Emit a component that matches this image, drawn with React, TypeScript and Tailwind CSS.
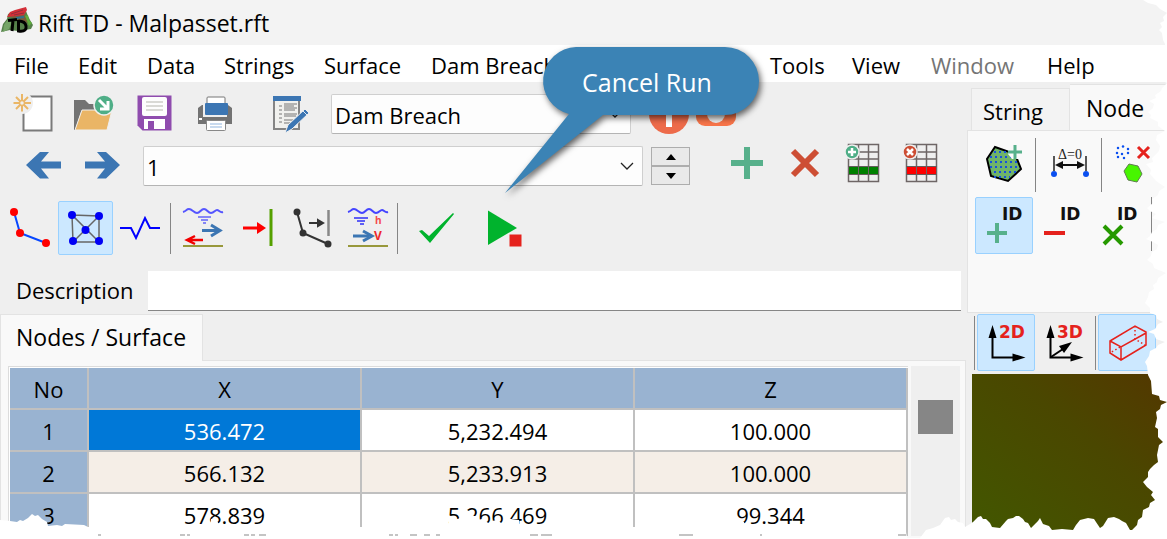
import type { ReactNode } from "react";
import clsx from "clsx";

const menuItems = [
  { label: "File", width: "w-[64px]" },
  { label: "Edit", width: "w-[69px]" },
  { label: "Data", width: "w-[77px]" },
  { label: "Strings", width: "w-[100px]" },
  { label: "Surface", width: "w-[107px]" },
  { label: "Dam Breach", width: "w-[339px]" },
  { label: "Tools", width: "w-[82px]" },
  { label: "View", width: "w-[79px]" },
  { label: "Window", width: "w-[116px]", disabled: true },
  { label: "Help", width: "w-[80px]" },
];

const nodes = [
  ["536.472", "5,232.494", "100.000"],
  ["566.132", "5,233.913", "100.000"],
  ["578.839", "5,266.469", "99.344"],
];

type ButtonProps = { label: string; className?: string; children: ReactNode };

function IconButton({ label, className, children }: ButtonProps) {
  return (
    <button
      type="button"
      aria-label={label}
      title={label}
      className={clsx("flex shrink-0 items-center justify-center", className)}
    >
      {children}
    </button>
  );
}

function ToolButton({
  label,
  active,
  children,
  width = "w-[55px]",
}: ButtonProps & { active?: boolean; width?: string }) {
  return (
    <IconButton
      label={label}
      className={clsx(
        "h-full rounded-xs border",
        width,
        active ? "border-[#99d1ff] bg-[#cce8ff]" : "border-transparent"
      )}
    >
      {children}
    </IconButton>
  );
}

function Separator({ className }: { className?: string }) {
  return <div className={clsx("w-px shrink-0 bg-[#858585]", className)} />;
}

function Icon({ children }: { children: ReactNode }) {
  return (
    <svg width="40" height="40" viewBox="0 0 40 40" className="shrink-0 overflow-visible" fill="none">
      {children}
    </svg>
  );
}

function TallIcon({ children }: { children: ReactNode }) {
  return (
    <svg width="40" height="46" viewBox="0 0 40 46" className="shrink-0" fill="none">
      {children}
    </svg>
  );
}

function AppLogo() {
  return (
    <svg width="34" height="28" viewBox="0 0 34 28" className="mb-1 shrink-0" fill="none">
      <path d="m1 25 2-8 4-5 1-5 6-3 9 1 3-1 2 5 2 4 3 5-2 4-6 1-7 1-8-1z" fill="#55804a" />
      <path d="m8 9 6-3 9 1 4 4 2 5-5-1-8-3z" fill="#7a5d3b" />
      <path d="m4 18 4-6 5 1-4 9-6 3z" fill="#75a567" />
      <path d="m25 9 3-1 1 5 3 3-3 3z" fill="#5fae3b" />
      <path d="m7 10 3-5 5-2L26 0l1 3-3 5-8 1z" fill="#d42f38" />
      <path d="m11 7 12-4M14 8l10-2" stroke="#93303a" strokeWidth="1" />
      <path d="m16 11 8-1" stroke="#2e7390" strokeWidth="2" />
      <path d="m8 13.500 9-1M13 13l-1 11" stroke="#000" strokeWidth="3" />
      <path d="M18.500 13v11c7 1 8-2 7.500-5s-2-5-7.500-5z" stroke="#000" strokeWidth="3" />
    </svg>
  );
}

function NewIcon() {
  return (
    <Icon>
      <path d="M9.500 2.500h28v34h-28z" fill="#fff" stroke="#7a7a7a" strokeWidth="2" />
      <circle cx="8" cy="9" r="11" fill="#efefef" />
      <path d="M8 0v6m0 6v5.500M-.500 9h6m5 0H17M2 3l4 4m4 4 4 4M14 3l-4 4m-4 4-4 4" stroke="#eab666" strokeWidth="2" />
      <circle cx="8" cy="9" r="2.500" stroke="#eab666" strokeWidth="1.500" />
    </Icon>
  );
}

function OpenIcon() {
  return (
    <Icon>
      <path d="M0 6h11l4 4h12v8H7L1 36H0z" fill="#737373" />
      <path d="M8 16h30l-5 20H1z" fill="#eab566" stroke="#efefef" strokeWidth="1" />
      <circle cx="30" cy="11" r="10" fill="#4fae87" stroke="#efefef" strokeWidth="1.500" />
      <path d="m25 6 8 8m1-7v8h-8" stroke="#fff" strokeWidth="3" />
    </Icon>
  );
}

function SaveIcon() {
  return (
    <Icon>
      <path d="M3.500 1.500h34v35h-29l-5-5z" fill="#8f4cae" />
      <rect x="8" y="3" width="25" height="19" rx="2" fill="#fdfdfd" />
      <path d="M12 8h17m-17 4h17m-17 4h17" stroke="#b5b5ad" />
      <path d="M10 25h21v10H10z" fill="#fff" />
      <path d="M14 27h6v8h-6z" fill="#8f4cae" />
    </Icon>
  );
}

function PrintIcon() {
  return (
    <Icon>
      <path d="M4 14 8 11h26l4 3v16H4z" fill="#737373" />
      <path d="M9 9h24v14H9z" fill="#efefef" />
      <rect x="13" y="3" width="18" height="9" rx="1" fill="#fff" stroke="#777" />
      <rect x="11" y="9" width="23" height="12" rx="1" fill="#3c76b3" />
      <path d="M5 24h3v2H5z" fill="#fff" />
      <rect x="12.500" y="26.500" width="19" height="10" rx="1" fill="#fff" stroke="#888" />
      <path d="M16 30h12m-12 3h12" stroke="#91b5df" />
    </Icon>
  );
}

function NotesIcon() {
  return (
    <Icon>
      <path d="M4 4h25v31H4z" fill="#f1f1ee" stroke="#858585" strokeWidth="2" />
      <path d="M3 2h28v5H3z" fill="#3c76b3" />
      <path d="M9 12h3m-3 4h3m-3 4h3m-3 4h3m-3 4h3m2-18h13m-13 2h10m-10 2h13m-13 2h11m-11 4h13m-13 2h12m-12 4h9m-9 3h7" stroke="#777" />
      <path d="m15 39 3-8 17-16 4 4-17 16z" fill="#3c76b3" stroke="#efefef" />
      <path d="m33 17 4 4" stroke="#dfebf8" />
    </Icon>
  );
}

function TableIcon({ bar, badge, remove }: { bar: string; badge: string; remove?: boolean }) {
  return (
    <TallIcon>
      <path d="M5.500 1.500h30v37h-30zM15.500 1v38m10-38v38m-20-30h30m-30 7h30m-30 8h30m-30 7h30" stroke="#6e6666" strokeWidth="1.500" />
      <path d="M6 24h9v7H6zm10 0h9v7h-9zm10 0h9v7h-9z" fill={bar} />
      <path d="M5 23.500h31M5 31.500h31" stroke="#665c5c" />
      <circle cx="9" cy="9" r="7" fill={badge} stroke="#efefef" strokeWidth="1.500" />
      <path
        d={remove ? "m6 6 6 6m0-6-6 6" : "M9 5v8M5 9h8"}
        stroke="#fff"
        strokeWidth="2.500"
      />
    </TallIcon>
  );
}

const waves = "M0 4c4-1 3-3 6-3s5 4 8 4 4-4 7-4 4 4 7 4 4-3 6-3 3 3 6 2";

function FlowIcon() {
  return (
    <Icon>
      <path d={waves} stroke="#5555ff" strokeWidth="2" />
      <path d="M15 9h13m-10 3h7m-5 3h3" stroke="#6464fa" strokeWidth="1.500" />
      <path d="M19 21h16v3H19z" fill="#3c76b3" />
      <path d="m28 17 9 5.500-9 5.500" stroke="#3c76b3" strokeWidth="3" />
      <path d="M20 32H6m6-4-8 4 8 4" stroke="#f20000" strokeWidth="2.500" />
      <path d="M0 38h40" stroke="#98983b" strokeWidth="2" />
    </Icon>
  );
}

function DepthIcon() {
  return (
    <Icon>
      <path d={waves} stroke="#4545ff" strokeWidth="2" />
      <path d="M6 10h14M9 13h8m-5 3h4" stroke="#5f5ff5" strokeWidth="2" />
      <path d="M5 28h16" stroke="#3c76b3" strokeWidth="3" />
      <path d="m15 23 9 5-9 5" stroke="#3c76b3" strokeWidth="3" />
      <text x="27" y="16" fontSize="10" fontWeight="700" fill="#f54a4a">h</text>
      <text x="26" y="32" fontSize="12" fontWeight="700" fill="#ee2929">V</text>
      <path d="M0 38h40" stroke="#98983b" strokeWidth="2" />
    </Icon>
  );
}

function Combo({ id, label, value, className }: { id: string; label: string; value: string; className: string }) {
  return (
    <div className={clsx("relative h-10", className)}>
      <select
        id={id}
        aria-label={label}
        defaultValue={value}
        className="size-full appearance-none rounded-xs border border-[#cfcfcf] border-b-[#b4b4b4] bg-[#fdfdfd] pt-px pr-8 pl-[3px]"
      >
        <option>{value}</option>
      </select>
      <svg width="14" height="8" viewBox="0 0 14 8" fill="none" className="pointer-events-none absolute top-4 right-[9px]">
        <path d="m1 1 6 6 6-6" stroke="#222" strokeWidth="1.250" />
      </svg>
    </div>
  );
}

function FileToolbar() {
  return (
    <div className="flex items-center pt-3 pl-[14px]">
      <div className="flex gap-5">
        <IconButton label="New"><NewIcon /></IconButton>
        <IconButton label="Open"><OpenIcon /></IconButton>
        <IconButton label="Save"><SaveIcon /></IconButton>
        <IconButton label="Print"><PrintIcon /></IconButton>
      </div>
      <IconButton label="Notes" className="ml-9"><NotesIcon /></IconButton>
      <Combo id="stage" label="Data type" value="Dam Breach" className="ml-[21px] w-[300px]" />
      <div className="ml-[18px] flex gap-[7px]">
        <IconButton label="Information">
          <Icon>
            <circle cx="20" cy="20" r="20" fill="#ed6b4a" />
            <path d="M17 6h6v5h-6zm0 8h6v19h-6z" fill="#fff" />
          </Icon>
        </IconButton>
        <IconButton label="Support">
          <Icon>
            <rect y="2" width="40" height="30" rx="9" fill="#f8754a" />
            <circle cx="20" cy="20" r="9" fill="#efefef" />
          </Icon>
        </IconButton>
      </div>
    </div>
  );
}

function RecordToolbar() {
  return (
    <div className="mt-3 flex h-10 items-center pl-[24px]">
      <div className="flex gap-[18px]">
        <IconButton label="Previous">
          <TallIcon>
            <path d="M37 18.500v7H17l8 10h-9L2 22 16 9h9l-8 9.500z" fill="#3c76b3" />
          </TallIcon>
        </IconButton>
        <IconButton label="Next">
          <TallIcon>
            <path d="M3 18.500v7h20l-8 10h9L38 22 24 9h-9l8 9.500z" fill="#3c76b3" />
          </TallIcon>
        </IconButton>
      </div>
      <Combo id="record" label="Record" value="1" className="ml-[21px] w-[500px]" />
      <div className="ml-2 flex h-[38px] w-[39px] flex-col">
        {["M0 6 5 0l5 6z", "m0 0 5 6 5-6z"].map((path, i) => (
          <button
            key={path}
            type="button"
            aria-label={i ? "Decrease" : "Increase"}
            className="flex flex-1 items-center justify-center border border-[#adadad] bg-[#e9e9e9]"
          >
            <svg width="10" height="6" viewBox="0 0 10 6"><path d={path} /></svg>
          </button>
        ))}
      </div>
      <div className="ml-[37px] flex gap-[18px]">
        <IconButton label="Add">
          <TallIcon><path d="M20 4v32M4 20h32" stroke="#57b08b" strokeWidth="6" /></TallIcon>
        </IconButton>
        <IconButton label="Delete">
          <TallIcon><path d="m8 8 24 24M32 8 8 32" stroke="#cd4e34" strokeWidth="6" /></TallIcon>
        </IconButton>
        <IconButton label="Insert row"><TableIcon bar="#008000" badge="#4fae87" /></IconButton>
        <IconButton label="Remove row"><TableIcon bar="#ff0000" badge="#cd4e34" remove /></IconButton>
      </div>
    </div>
  );
}

function ModelToolbar() {
  return (
    <div className="mt-[15px] flex h-[54px] items-center pl-[3px]">
      <ToolButton label="Strings">
        <Icon>
          <path d="m3 4 6 21 26 10" stroke="#0847ff" strokeWidth="2" />
          <g fill="red"><circle cx="3" cy="4" r="4" /><circle cx="9" cy="25" r="4" /><circle cx="35" cy="35" r="4" /></g>
        </Icon>
      </ToolButton>
      <ToolButton label="Surface" active>
        <Icon>
          <path d="m6 7 27 1v26H7L6 7l27 27M33 8 7 34" stroke="#666" strokeWidth="1.500" />
          <g fill="#0000f5">
            <circle cx="6" cy="7" r="4" /><circle cx="33" cy="8" r="4" /><circle cx="19.500" cy="22" r="4" />
            <circle cx="7" cy="33" r="4" /><circle cx="33" cy="33" r="4" />
          </g>
        </Icon>
      </ToolButton>
      <ToolButton label="Sections">
        <Icon><path d="M-1 20h11l5 10 9-20 5 10h10" stroke="#00f" strokeWidth="2" /></Icon>
      </ToolButton>
      <Separator className="mr-1 ml-[2px] h-[51px]" />
      <ToolButton label="Inflow and outflow"><FlowIcon /></ToolButton>
      <ToolButton label="Boundary">
        <Icon>
          <path d="M5 20h16" stroke="red" strokeWidth="3" />
          <path d="m19 14 9 6-9 6z" fill="red" />
          <path d="M33 1v37" stroke="#55a000" strokeWidth="3" />
        </Icon>
      </ToolButton>
      <ToolButton label="String boundary">
        <Icon>
          <path d="m4 4 6 21 25 11" stroke="#333" strokeWidth="2" />
          <g fill="#333"><circle cx="4" cy="4" r="3.500" /><circle cx="10" cy="25" r="3.500" /><circle cx="35" cy="36" r="3.500" /></g>
          <path d="M16 15h12m-3-3 5 3-5 3z" fill="#333" stroke="#333" strokeWidth="2" />
          <path d="M35.500 2v26" stroke="#888" strokeWidth="2.500" />
        </Icon>
      </ToolButton>
      <ToolButton label="Depth and velocity"><DepthIcon /></ToolButton>
      <Separator className="mr-[10px] ml-[2px] h-[51px]" />
      <ToolButton label="Check">
        <Icon><path d="m3 23 3-1 7 6L37 5l1 1-24 29z" fill="#00b32d" /></Icon>
      </ToolButton>
      <ToolButton label="Run" width="ml-[14px] w-[55px]">
        <Icon>
          <path d="M3 2.500 32 20 3 37z" fill="#00b32d" />
          <path d="M24 26h13v13H24z" fill="#e5221d" stroke="#efefef" />
        </Icon>
      </ToolButton>
    </div>
  );
}

function NodeTable() {
  return (
    <div className="flex items-stretch pt-[5px] pr-[5px] pl-[7px]">
      <div className="min-w-0 flex-1 border-t border-l border-[#dcdcdc] bg-white pt-px pl-px">
        <table className="w-full table-fixed border-separate border-spacing-0 text-center">
          <colgroup>
            <col className="w-[79px]" />
            <col />
            <col />
            <col />
          </colgroup>
          <thead>
            <tr className="h-[42px]">
              {["No", "X", "Y", "Z"].map((name) => (
                <th key={name} scope="col" className="border-r-2 border-b-2 border-[#c0c0c0] bg-[#99b3d1] pt-[2px] font-normal">
                  {name}
                </th>
              ))}
            </tr>
          </thead>
          <tbody>
            {nodes.map((row, i) => (
              <tr key={row[0]} className={clsx("h-[42px]", i % 2 ? "bg-[#f5eee7]" : "bg-white")}>
                <th scope="row" className="border-r-2 border-b-2 border-[#c0c0c0] bg-[#99b3d1] pt-[2px] font-normal">
                  {i + 1}
                </th>
                {row.map((value, j) => (
                  <td
                    key={j}
                    className={clsx(
                      "border-r-2 border-b-2 border-[#c0c0c0] pt-[2px]",
                      i === 0 && j === 0 && "bg-[#0078d7] text-white"
                    )}
                  >
                    {value}
                  </td>
                ))}
              </tr>
            ))}
          </tbody>
        </table>
      </div>
      <div className="ml-[3px] w-[49px] bg-[#efefef] pt-[34px] pl-[7px]">
        <div className="h-[34px] w-[35px] bg-[#868686]" />
      </div>
    </div>
  );
}

function SidePanel() {
  return (
    <aside className="flex w-[200px] shrink-0 flex-col">
      <div role="tablist" className="flex h-[48px] items-end pl-1">
        <button type="button" role="tab" className="h-[42px] w-[99px] shrink-0 border border-b-0 border-[#e3e3e3] bg-[#f3f3f3] pt-[2px] pl-[11px] text-left">
          String
        </button>
        <button type="button" role="tab" aria-selected="true" className="h-[46px] flex-1 border-t border-[#e3e3e3] bg-[#f9f9f9] pl-4 text-left text-[23px]">
          Node
        </button>
      </div>

      <div className="h-[183px] border border-r-0 border-[#e3e3e3] bg-[#f9f9f9] pt-[5px] pl-[7px]">
        <div className="flex h-[57px] items-center">
          <ToolButton label="Add surface nodes" width="w-[58px]">
            <Icon>
              <path d="m11 2 20 7 6 15-13 12-17-5L3 14z" fill="#70b36a" stroke="#000" strokeWidth="2" />
              <path d="M10 7h20M6 12h28M6 17h28M6 22h28M10 27h24M10 32h16" stroke="#1550df" strokeWidth="2" strokeDasharray="2 3" />
              <path d="M24 0h16v14H28l-4-5z" fill="#f9f9f9" />
              <path d="M31 0v14m-7-7h14" stroke="#57b08b" strokeWidth="3" />
            </Icon>
          </ToolButton>
          <Separator className="mr-[5px] ml-[2px] h-[54px]" />
          <ToolButton label="Zero difference" width="w-[58px]">
            <Icon>
              <text x="20" y="14" fontSize="14" textAnchor="middle" fontFamily="Liberation Serif, serif" fill="#222">Δ=0</text>
              <path d="M4 11v15m32-15v15" stroke="#222" strokeWidth="1.500" />
              <path d="M7 20h26" stroke="#111" strokeWidth="2" />
              <path d="m5 20 8-4v8zm30 0-8-4v8z" fill="#111" />
              <circle cx="4" cy="29" r="3" fill="#0b50f0" /><circle cx="36" cy="29" r="3" fill="#0b50f0" />
            </Icon>
          </ToolButton>
          <Separator className="mr-[3px] ml-[2px] h-[54px]" />
          <ToolButton label="Delete surface nodes" width="w-[58px]">
            <Icon>
              <g fill="#0b50f0">
                <circle cx="3" cy="8" r="1.250" /><circle cx="9" cy="1.500" r="1.250" /><circle cx="14" cy="4" r="1.250" />
                <circle cx="14" cy="8" r="1.250" /><circle cx="8" cy="9" r="1.250" /><circle cx="4" cy="12" r="1.250" />
                <circle cx="10" cy="13" r="1.250" /><circle cx="4" cy="3" r="1.250" />
              </g>
              <path d="m24 2 11 11m0-11L24 13" stroke="#e5221d" strokeWidth="3" />
              <path d="m15 19 9 2 4 8-5 8-9-2-4-9z" fill="#47f500" stroke="#607c50" />
            </Icon>
          </ToolButton>
        </div>
        <div className="mt-1 flex h-[57px]">
          <ToolButton label="Show node numbers" active width="w-[58px]">
            <IdIcon><path d="M13 17v20M3 27h20" stroke="#57b08b" strokeWidth="4" /></IdIcon>
          </ToolButton>
          <ToolButton label="Hide node numbers" width="w-[57px]">
            <IdIcon><path d="M2 27h21" stroke="#e5221d" strokeWidth="4" /></IdIcon>
          </ToolButton>
          <ToolButton label="Clear node numbers" width="w-[58px]">
            <IdIcon><path d="m5 20 18 18m0-18L5 38" stroke="#269900" strokeWidth="4" /></IdIcon>
          </ToolButton>
          <Separator className="ml-[3px] h-[54px]" />
        </div>
      </div>

      <div className="mt-px flex h-[57px] items-center pl-[7px]">
        <Separator className="mr-[2px] h-[54px]" />
        <ToolButton label="Plan view" active width="w-[58px]">
          <AxisIcon label="2D" />
        </ToolButton>
        <ToolButton label="3D view" width="w-[57px]">
          <AxisIcon label="3D" />
        </ToolButton>
        <Separator className="mr-[2px] ml-[3px] h-[54px]" />
        <ToolButton label="Bounding box" active width="w-[58px]">
          <Icon>
            <path d="M3 18 28 3l11 6v13L14 37 3 30zM3 18l11 6 25-14M14 24v12" stroke="#e5221d" strokeWidth="1.500" />
            <path d="M28 3v13l10 6M13 24 3 30" stroke="#e5221d" strokeWidth="1.500" strokeDasharray="1.500 2.500" />
          </Icon>
        </ToolButton>
      </div>
      <div
        role="img"
        aria-label="Terrain view"
        className="mt-[3px] ml-[5px] flex-1 bg-linear-to-tr from-[#435500] from-10% via-[#4a4700] via-60% to-[#533700]"
      />
    </aside>
  );
}

function IdIcon({ children }: { children: ReactNode }) {
  return (
    <Icon>
      <text x="18" y="14" fontSize="17" fontWeight="700" fontFamily="DejaVu Sans, sans-serif" fill="#111">ID</text>
      {children}
    </Icon>
  );
}

function AxisIcon({ label }: { label: string }) {
  return (
    <Icon>
      <path d="M6.500 10v24.500H31" stroke="#000" strokeWidth="2" />
      <path d="m6.500 2-4 13h8zm33 32.500-13-4v8z" fill="#000" />
      {label === "3D" && (
        <>
          <path d="m7 34 15-10" stroke="#000" strokeWidth="2" />
          <path d="m28 19-13 4 5 7z" fill="#000" />
        </>
      )}
      <text x="13" y="15" fontSize="17" fontWeight="700" fontFamily="DejaVu Sans, sans-serif" fill="#e5221d">{label}</text>
    </Icon>
  );
}

function Callout() {
  return (
    <div className="absolute top-[47px] left-[505px] w-[254px]">
      <svg width="254" height="146" viewBox="0 0 254 146" className="drop-shadow-[2px_3px_3px_rgba(0,0,0,0.6)]">
        <path d="M71 0h149a34 34 0 0 1 0 68H98L0 146 64 67A34 34 0 0 1 71 0z" fill="#3b83b5" />
      </svg>
      <span className="absolute top-[19px] left-[77px] text-[25px] leading-8 whitespace-nowrap text-white">Cancel Run</span>
    </div>
  );
}

function TornEdges() {
  return (
    <>
      <svg width="40" height="539" viewBox="1127 0 40 539" className="pointer-events-none absolute top-0 right-0" fill="#fff">
        <path d="M1143 0L1148 3 1156 5 1160 9 1167 13 1163 17 1164 21 1160 23 1162 27 1159 30 1162 33 1163 40 1165 44V82L1167 83 1162 88 1161 91 1155 95 1156 98 1149 101 1154 104 1153 108 1148 112 1151 115 1150 118 1158 122 1158 126 1165 131 1157 135 1156 140 1160 146 1159 151 1152 158 1153 162 1146 164 1151 170 1150 174 1156 181 1165 187 1159 191 1158 195 1152 199 1153 203 1147 208 1150 211 1156 214 1152 218 1158 220 1165 222 1158 225 1157 229 1152 232 1150 236 1146 239 1153 242 1158 245 1157 249 1152 252 1151 256 1147 260 1153 264 1154 268 1166 273 1158 278 1157 282 1153 285 1154 289 1149 292 1148 297 1145 303 1150 308 1150 313 1156 315 1157 319 1163 322 1158 324 1155 329 1148 332 1154 334 1156 339 1165 342 1158 345 1156 348 1150 351 1149 356 1145 362 1147 366 1148 375 1151 381 1152 394 1159 396 1160 400 1167 402 1161 405 1160 409 1156 412 1157 418 1155 427 1158 429 1158 437 1163 442 1159 445 1157 455 1158 462 1154 465 1150 469 1148 472 1148 477 1143 482 1147 487 1153 492 1151 495 1155 500 1150 503 1149 507 1143 510 1142 517 1138 520 1137 525 1132 530 1129 539H1167V0z" />
      </svg>
      <svg width="1167" height="34" viewBox="0 505 1167 34" className="pointer-events-none absolute top-[505px] left-0" fill="#fff">
        <path d="M0 520L10 521 17 522 20 520 23 521 28 518 32 514 35 516 38 515 42 519 47 522 48 526 57 525 62 526 65 524 84 525 88 527H210L211 519 215 518 219 524 222 527H448L449 521 453 518 458 519 462 516 476 516 478 520 482 519 490 524 492 521 497 520 504 525 506 517 511 519 519 520 520 527H736L737 521 744 522 745 526H905L907 538 920 538 926 530 933 528 940 525 945 518 949 517 951 520 955 519 958 522 963 523 965 527 970 524 973 522 978 517 981 516 983 519 986 519 990 523 992 527 1000 528 1006 521 1008 519 1013 518 1016 516 1019 516 1023 519 1025 522 1028 523 1031 528 1038 521 1040 518 1043 524 1049 526 1052 530 1062 529 1073 530 1076 525 1080 520 1088 518 1094 519 1098 525 1100 528 1103 526 1108 518 1114 517 1119 519 1122 521 1126 523 1130 530 1167 530V539H0z" />
        <path
          d="M98 535h3M180 535h5M187 535h3M244 535h5M251 535h4M259 535h7M389 535h4M395 535h3M410 535h7M424 535h6M436 535h4M530 535h8M541 535h11M679 535h14M760 535h2M898 535h8"
          stroke="#c4c4c4"
          strokeWidth="2"
        />
      </svg>
    </>
  );
}

export default function App() {
  return (
    <div className="relative flex min-h-screen flex-col overflow-hidden bg-[#efefef] font-['Open_Sans',sans-serif] text-[22px] leading-8 text-black">
      <header className="flex h-[45px] items-center gap-1 bg-[#f3f3f3]">
        <AppLogo />
        <h1 className="text-[23px]">Rift TD - Malpasset.rft</h1>
      </header>

      <nav className="flex h-[37px] items-center bg-white pt-[2px] pl-[14px]">
        {menuItems.map((item) => (
          <button
            key={item.label}
            type="button"
            disabled={item.disabled}
            className={clsx("shrink-0 text-left whitespace-nowrap disabled:text-[#757575]", item.width)}
          >
            {item.label}
          </button>
        ))}
      </nav>

      <main className="flex flex-1">
        <section className="flex min-w-0 flex-1 flex-col">
          <FileToolbar />
          <RecordToolbar />
          <ModelToolbar />

          <div className="mt-4 mr-[6px] flex h-10 items-center pl-4">
            <label htmlFor="description" className="w-[132px] shrink-0 pb-[2px]">
              Description
            </label>
            <input id="description" type="text" className="h-full min-w-0 flex-1 border-b border-[#868686] bg-white px-2" />
          </div>

          {/* Nodes / Surface */}
          <div className="mt-[3px] flex">
            <button type="button" role="tab" aria-selected="true" className="relative z-10 -mb-px h-[47px] w-[203px] border border-b-0 border-[#e3e3e3] bg-[#f9f9f9] pb-[2px] pl-[15px] text-left text-[23px] whitespace-nowrap">
              Nodes / Surface
            </button>
          </div>
          <div className="mr-px flex-1 border border-[#e3e3e3] bg-[#f9f9f9]">
            <NodeTable />
          </div>
        </section>
        <SidePanel />
      </main>

      <TornEdges />
      <Callout />
    </div>
  );
}
